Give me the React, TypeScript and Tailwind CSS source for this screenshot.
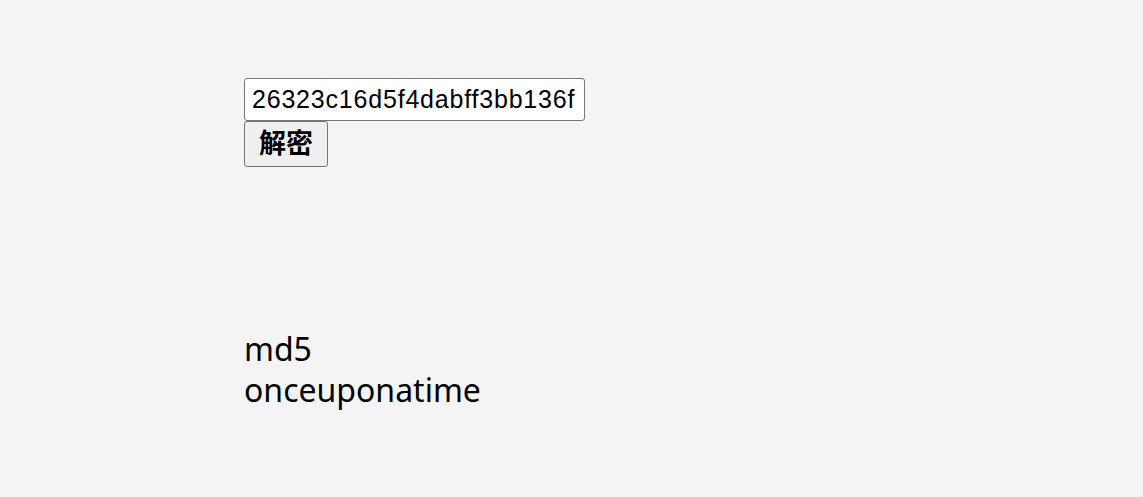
export default function App() {
  return (
    <div className="min-h-[497px] bg-[#f4f4f4] pl-[244px] pt-[78px]">
      <div className="flex flex-col items-start">
        <input
          type="text"
          defaultValue="26323c16d5f4dabff3bb136f"
          className="h-[43px] w-[341px] rounded-[3px] border border-[#767676] bg-white pl-[7px] pr-0 font-['Liberation_Sans',Arial,sans-serif] text-[25px] tracking-[0.8px] text-black outline-none"
        />
        <button
          type="button"
          className="flex h-[46px] w-[84px] items-center justify-center rounded-[3px] border border-[#767676] bg-[#efefef] font-['Liberation_Sans','Noto_Sans_CJK_SC',sans-serif] text-[27px] font-bold text-black"
        >
          解密
        </button>
      </div>
      <div className="mt-[161px] font-['Noto_Sans',sans-serif] text-[32px] leading-[41px] text-black">
        <div>md5</div>
        <div>onceuponatime</div>
      </div>
    </div>
  );
}
